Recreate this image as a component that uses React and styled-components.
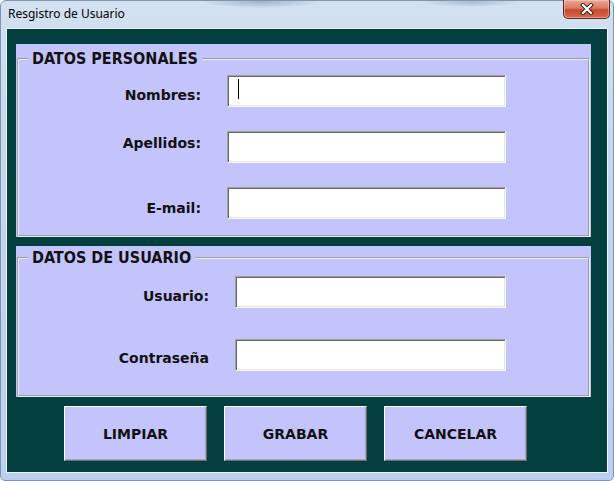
import React from "react";
import styled, { createGlobalStyle } from "styled-components";

const GlobalStyle = createGlobalStyle`
	html, body {
		margin: 0;
		padding: 0;
		overflow: hidden;
		background: #ffffff;
	}
	body {
		font-family: "DejaVu Sans", Tahoma, sans-serif;
	}
`;

const Window = styled.div`
	width: 614px;
	height: 481px;
	box-sizing: border-box;
	display: flex;
	flex-direction: column;
	border: 1px solid #8194ad;
	border-radius: 6px 6px 5px 5px;
	background:
		radial-gradient(ellipse 60px 6px at 260px 1px, rgba(70, 95, 130, 0.35), transparent),
		radial-gradient(ellipse 50px 5px at 470px 1px, rgba(70, 95, 130, 0.3), transparent),
		linear-gradient(180deg, #d3e1f1 0%, #c6d8ed 30%, #bccff0 100%);
`;

const TitleBar = styled.div`
	height: 28px;
	display: flex;
	justify-content: space-between;
	align-items: flex-start;
`;

const Title = styled.span`
	padding: 5px 0 0 7px;
	font-family: "Noto Sans", "Open Sans", sans-serif;
	font-size: 12px;
	line-height: 16px;
	color: #000;
`;

const CloseButton = styled.div`
	width: 47px;
	height: 19px;
	margin: -1px 3px 0 0;
	box-sizing: border-box;
	display: flex;
	align-items: center;
	justify-content: center;
	border: 1px solid #5b2a22;
	border-top: none;
	border-radius: 0 0 5px 5px;
	background: linear-gradient(180deg, #eaa898 0%, #d97a62 45%, #c54a2e 55%, #d6684c 100%);
	box-shadow: inset 0 0 0 1px rgba(255, 220, 210, 0.45);
`;

const Client = styled.div`
	flex: 1;
	margin: 0 6px 8px;
	padding: 15px 16px 11px 9px;
	display: flex;
	flex-direction: column;
	gap: 9px;
	background: #033f3f;
	box-shadow: 0 0 0 1px #eef4fb;
`;

const Panel = styled.div`
	height: ${({ $height }) => $height}px;
	box-sizing: border-box;
	padding: ${({ $top }) => $top}px 1px 0 1px;
	display: flex;
	flex-direction: column;
	background: #c4c4fd;
`;

const Fieldset = styled.fieldset`
	flex: 1;
	margin: 0;
	padding: 0;
	min-width: 0;
	border: 2px groove #ededf8;
`;

const Legend = styled.legend`
	margin-left: 9px;
	padding: 0 4px;
	font-family: "DejaVu Sans Condensed", "DejaVu Sans", Tahoma, sans-serif;
	font-stretch: condensed;
	font-size: 16px;
	font-weight: 700;
	line-height: 20px;
	color: #111;
`;

const Form = styled.div`
	display: grid;
	grid-template-columns: ${({ $labelWidth }) => $labelWidth}px ${({ $inputWidth }) => $inputWidth}px;
	column-gap: 26px;
	row-gap: ${({ $rowGap }) => $rowGap}px;
	padding-top: ${({ $top }) => $top}px;
`;

const Label = styled.label`
	align-self: center;
	margin-top: ${({ $shift = 0 }) => $shift}px;
	text-align: right;
	font-size: 14px;
	font-weight: 700;
	color: #111;
`;

const Field = styled.div`
	position: relative;
	height: 32px;
	box-sizing: border-box;
	border: 1px solid;
	border-color: #a0a0a0 #ffffff #ffffff #a0a0a0;
	box-shadow: inset 1px 1px 0 #6a6a6a, inset -1px -1px 0 #e3e3e3;
	background: #fff;
`;

const Input = styled.input`
	width: 100%;
	height: 100%;
	box-sizing: border-box;
	padding: 0 8px;
	border: none;
	outline: none;
	background: transparent;
	font-family: "DejaVu Sans", Tahoma, sans-serif;
	font-size: 14px;
`;

const Caret = styled.span`
	position: absolute;
	left: 10px;
	top: 3px;
	width: 1px;
	height: 20px;
	background: #000;
`;

const Buttons = styled.div`
	display: flex;
	gap: 17px;
	padding-left: 48px;
`;

const Button = styled.button`
	width: 143px;
	height: 55px;
	box-sizing: border-box;
	padding: 0;
	border: 1px solid;
	border-color: #ffffff #6f6f6f #6f6f6f #ffffff;
	box-shadow: inset -1px -1px 0 #a4a4c4;
	background: #c4c4fd;
	font-family: "DejaVu Sans", Tahoma, sans-serif;
	font-size: 14px;
	font-weight: 700;
	color: #111;
`;

const personal = [
	{ label: "Nombres:", shift: 8, caret: true },
	{ label: "Apellidos:", shift: -8 },
	{ label: "E-mail:", shift: 10 },
];

const account = [
	{ label: "Usuario:", shift: 7 },
	{ label: "Contraseña", shift: 6 },
];

const Row = ({ label, shift, caret }) => (
	<>
		<Label $shift={shift}>{label}</Label>
		<Field>
			<Input type="text" />
			{caret && <Caret />}
		</Field>
	</>
);

const App = () => {
	return (
		<>
			<GlobalStyle />
			<Window>
				<TitleBar>
					<Title>Resgistro de Usuario</Title>
					<CloseButton>
						<svg width="14" height="12" viewBox="0 0 14 12">
							<path d="M3 2 L11 10 M11 2 L3 10" stroke="#3a1a14" strokeWidth="4" strokeLinecap="square" />
							<path d="M3 2 L11 10 M11 2 L3 10" stroke="#ffffff" strokeWidth="2.2" strokeLinecap="square" />
						</svg>
					</CloseButton>
				</TitleBar>
				<Client>
					<Panel $height={193} $top={5}>
						<Fieldset>
							<Legend>DATOS PERSONALES</Legend>
							<Form $labelWidth={182} $inputWidth={279} $rowGap={24} $top={6}>
								{personal.map((row) => (
									<Row key={row.label} {...row} />
								))}
							</Form>
						</Fieldset>
					</Panel>
					<Panel $height={151} $top={2}>
						<Fieldset>
							<Legend>DATOS DE USUARIO</Legend>
							<Form $labelWidth={190} $inputWidth={271} $rowGap={31} $top={8}>
								{account.map((row) => (
									<Row key={row.label} {...row} />
								))}
							</Form>
						</Fieldset>
					</Panel>
					<Buttons>
						<Button>LIMPIAR</Button>
						<Button>GRABAR</Button>
						<Button>CANCELAR</Button>
					</Buttons>
				</Client>
			</Window>
		</>
	);
};

export default App;
